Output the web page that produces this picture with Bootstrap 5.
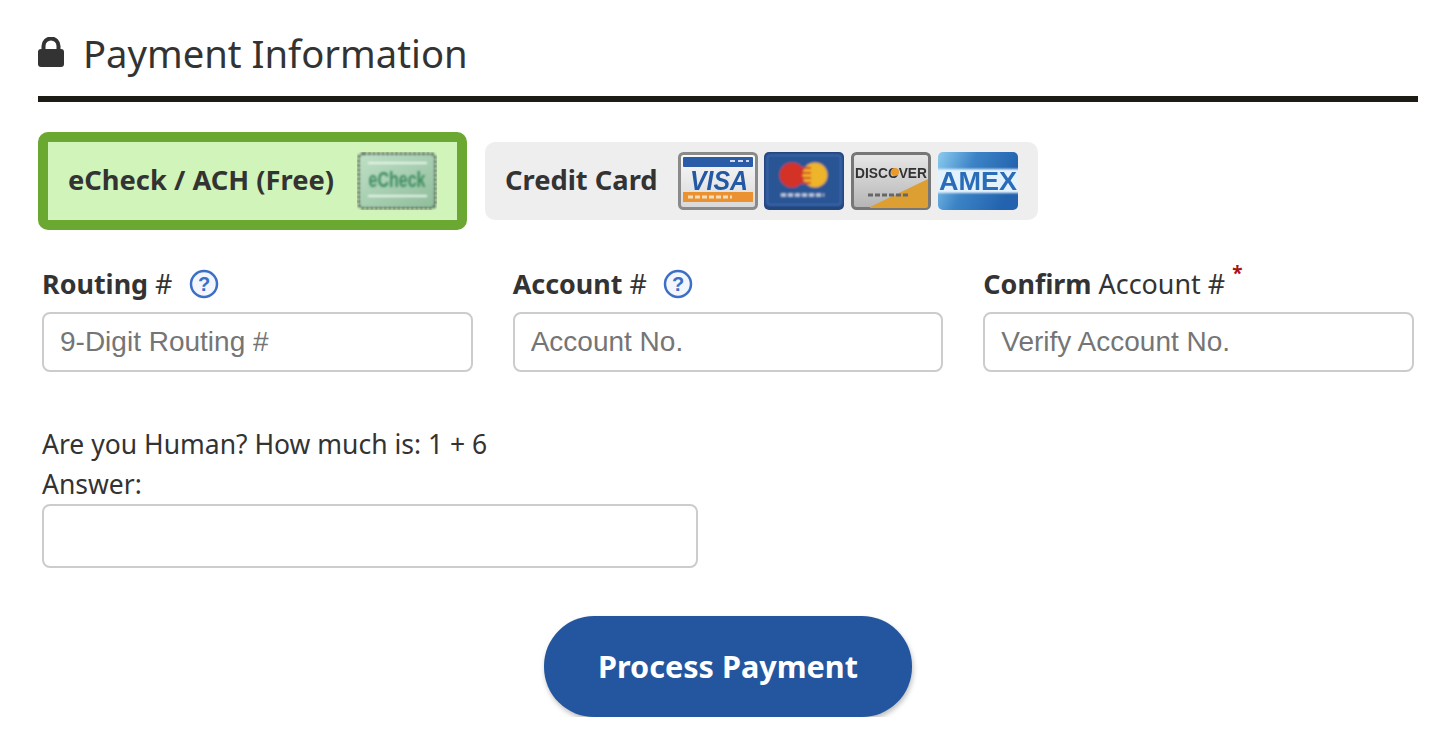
<!doctype html>
<html lang="en"><head><meta charset="utf-8"><title>Payment Information</title>
<link href="https://cdn.jsdelivr.net/npm/bootstrap@5.3.0/dist/css/bootstrap.min.css" rel="stylesheet">
<style>
body{background:#fff;color:#333;font-family:"Noto Sans",sans-serif;font-size:27px;line-height:40px;padding:0 22px 0 38px;}
.pay-head{height:102px;border-bottom:6px solid #1d1c14;gap:19px;padding-top:10px;padding-bottom:0;margin:0 0 30px;}
.pay-head h1{font:400 38.200px/48px "Noto Sans",sans-serif;color:#333;margin:0;}
.pay-head .lock{margin-top:-2px;}
.pay-tab{font-weight:700;font-size:27.300px;line-height:30px;border-radius:10px;padding:10px 20px;color:#333;text-decoration:none;}
.pay-tab>span{padding-bottom:2px;}
.tab-on{background:#d0f4b9;border:10px solid #6ba832;gap:23px;}
.tab-off{background:#eee;gap:6.670px;padding-right:20px;}
.tab-off .tab-name{margin-right:13.500px;}
.pay-tabs{gap:18px;margin-bottom:34px;height:98px;}
.pay-fields{gap:40px;padding:0 4px;margin-bottom:52px;}
.pay-field{flex:1 1 0;min-width:0;}
.pay-lab{font-size:26.900px;line-height:40px;height:40px;margin:0 0 8px;gap:16px;color:#333;align-items:center;}
.pay-lab b{font-weight:700;}
.req{color:#a11;font-size:19px;position:relative;top:-11px;margin-left:-9px;font-weight:700;}
.form-control.pay-in{height:60px;border:2px solid #ccc;border-radius:8px;font:28px/1.2 "Liberation Sans",sans-serif;padding:0 16px;color:#333;}
.form-control.pay-in::placeholder{color:#757575;opacity:1;}
.human{padding:0 4px;}
.human-q{font-size:26.500px;line-height:40px;margin:0;}
.form-control.pay-ans{width:656px;height:64px;}
.pay-go{margin-top:48px;}
.btn.go-btn{width:368px;height:101px;border-radius:50px;background:#23569e;border:0;color:#fff;font-weight:700;font-size:30.600px;box-shadow:1px 3px 5px rgba(0,0,0,.25);}
.logo{display:block;width:80px;height:58px;flex:none;}
.qmark{display:block;width:30px;height:30px;flex:none;}
.lock{display:block;width:26px;height:30px;flex:none;}
.logo text{font-family:"Liberation Sans",sans-serif;}
</style></head>
<body>
<svg width="0" height="0" class="position-absolute"><defs>
<filter id="b1" x="-10%" y="-10%" width="120%" height="120%"><feGaussianBlur stdDeviation="1.300"/></filter>
<filter id="b2" x="-3%" y="-3%" width="106%" height="106%"><feGaussianBlur stdDeviation="1"/></filter>
<filter id="b3" x="-3%" y="-3%" width="106%" height="106%"><feGaussianBlur stdDeviation="0.700"/></filter>
<linearGradient id="gV" x1="0" y1="0" x2="0" y2="1"><stop offset="0" stop-color="#fafafa"/><stop offset="1" stop-color="#d8d8d8"/></linearGradient>
<linearGradient id="gD" x1="0" y1="0" x2="0" y2="1"><stop offset="0" stop-color="#e8e8e8"/><stop offset="1" stop-color="#b4b4b4"/></linearGradient>
<linearGradient id="gE" x1="0" y1="0" x2="1" y2="1"><stop offset="0" stop-color="#bfe0c6"/><stop offset="1" stop-color="#8fbd9b"/></linearGradient>
<linearGradient id="gA" x1="0" y1="0" x2="1" y2="0.3"><stop offset="0" stop-color="#8ccbf0"/><stop offset=".45" stop-color="#3c84c6"/><stop offset="1" stop-color="#2362ae"/></linearGradient>
</defs></svg>
<header class="pay-head d-flex align-items-center">
<svg class="lock" viewBox="0 0 26 30"><path d="M5.500 13V9a7.500 7.500 0 0 1 15 0v4" fill="none" stroke="#333" stroke-width="4"/><rect x="0" y="12" width="26" height="18" rx="3" fill="#333"/></svg>
<h1>Payment Information</h1>
</header>
<div class="pay-tabs d-flex align-items-center">
<a class="pay-tab tab-on d-flex align-items-center" href="#"><span>eCheck / ACH (Free)</span>
<svg class="logo" viewBox="0 0 80 58"><rect x="2" y="2" width="76" height="54" rx="4" fill="url(#gE)"/><g filter="url(#b2)"><rect x="1.500" y="1.500" width="77" height="55" rx="5" fill="none" stroke="#4c584f" stroke-width="2.500" stroke-dasharray="3 1.500"/><path d="M11 11H70M11 44H70" stroke="#e8f5ea" stroke-width="2"/><text transform="translate(40 35) scale(1 1.400)" text-anchor="middle" font-size="16" font-weight="700" fill="#3f8c63">eCheck</text></g></svg></a>
<a class="pay-tab tab-off d-flex align-items-center" href="#"><span class="tab-name">Credit Card</span>
<svg class="logo" viewBox="0 0 80 58"><g filter="url(#b3)"><rect x="1.500" y="1.500" width="77" height="55" rx="4" fill="url(#gV)" stroke="#8a8a8a" stroke-width="3"/><rect x="5" y="5" width="70" height="10" rx="1" fill="#2a5ba8"/><path d="M52 9H71" stroke="#cfd9ea" stroke-width="2" stroke-dasharray="5 3"/><text x="41" y="38" text-anchor="middle" font-size="27" font-style="italic" font-weight="700" textLength="58" lengthAdjust="spacingAndGlyphs" fill="#2458a4">VISA</text><rect x="5" y="40" width="70" height="10" fill="#ea9230"/><path d="M10 45H54" stroke="#f6dcb8" stroke-width="3" stroke-dasharray="5 2"/></g></svg>
<svg class="logo" viewBox="0 0 80 58"><rect x="0" y="0" width="80" height="58" rx="5" fill="#24467f"/><g filter="url(#b2)"><rect x="3" y="3" width="74" height="50" rx="3" fill="#2c5595" stroke="#3d6fb5" stroke-width="1.500"/><circle cx="28" cy="23" r="12.500" fill="#d43228"/><circle cx="51" cy="23" r="12.500" fill="#eeb42c"/><path d="M38 16h9M37 21h10M37 26h10M38 31h9" stroke="#d43228" stroke-width="2"/><path d="M17 43H60" stroke="#c6d3e6" stroke-width="3" stroke-dasharray="5 2"/></g></svg>
<svg class="logo" viewBox="0 0 80 58"><g filter="url(#b3)"><rect x="1.500" y="1.500" width="77" height="55" rx="4" fill="url(#gD)" stroke="#777" stroke-width="3"/><path d="M19 55L77 27V54a2 2 0 0 1-2 2H19z" fill="#dd9f30"/><text x="40" y="26" text-anchor="middle" font-size="14" font-weight="700" textLength="72" lengthAdjust="spacingAndGlyphs" fill="#333">DISCOVER</text><circle cx="44" cy="20" r="4" fill="#e89a2a"/><path d="M17 43H58" stroke="#666" stroke-width="3" stroke-dasharray="5 2"/></g></svg>
<svg class="logo" viewBox="0 0 80 58"><rect width="80" height="58" rx="5" fill="url(#gA)"/><rect x="-2" y="17" width="84" height="24" fill="#e3f2fc" filter="url(#b1)"/><text x="40" y="38" text-anchor="middle" font-size="25" font-weight="700" textLength="78" lengthAdjust="spacingAndGlyphs" fill="#2a6cb8" filter="url(#b3)">AMEX</text></svg></a>
</div>
<form onsubmit="return false">
<div class="pay-fields d-flex">
<div class="pay-field"><label class="pay-lab d-flex" for="f1"><span><b>Routing</b> #</span>
<svg class="qmark" viewBox="0 0 30 30"><circle cx="15" cy="15" r="13" fill="#f3f6fc" stroke="#3d6fc4" stroke-width="2.500"/><text x="15" y="22" text-anchor="middle" font-family="Liberation Sans" font-weight="700" font-size="20" fill="#3d6fc4">?</text></svg></label>
<input id="f1" class="form-control pay-in" placeholder="9-Digit Routing #"></div>
<div class="pay-field"><label class="pay-lab d-flex" for="f2"><span><b>Account</b> #</span>
<svg class="qmark" viewBox="0 0 30 30"><circle cx="15" cy="15" r="13" fill="#f3f6fc" stroke="#3d6fc4" stroke-width="2.500"/><text x="15" y="22" text-anchor="middle" font-family="Liberation Sans" font-weight="700" font-size="20" fill="#3d6fc4">?</text></svg></label>
<input id="f2" class="form-control pay-in" placeholder="Account No."></div>
<div class="pay-field"><label class="pay-lab d-flex" for="f3"><span><b>Confirm</b> Account #</span><span class="req">*</span></label>
<input id="f3" class="form-control pay-in" placeholder="Verify Account No."></div>
</div>
<div class="human">
<p class="human-q">Are you Human? How much is: 1 + 6<br>Answer:</p>
<input class="form-control pay-in pay-ans" aria-label="Answer">
</div>
<div class="pay-go d-flex justify-content-center"><button class="btn go-btn" type="submit">Process Payment</button></div>
</form>
<script src="https://cdn.jsdelivr.net/npm/bootstrap@5.3.0/dist/js/bootstrap.bundle.min.js"></script>
</body></html>
